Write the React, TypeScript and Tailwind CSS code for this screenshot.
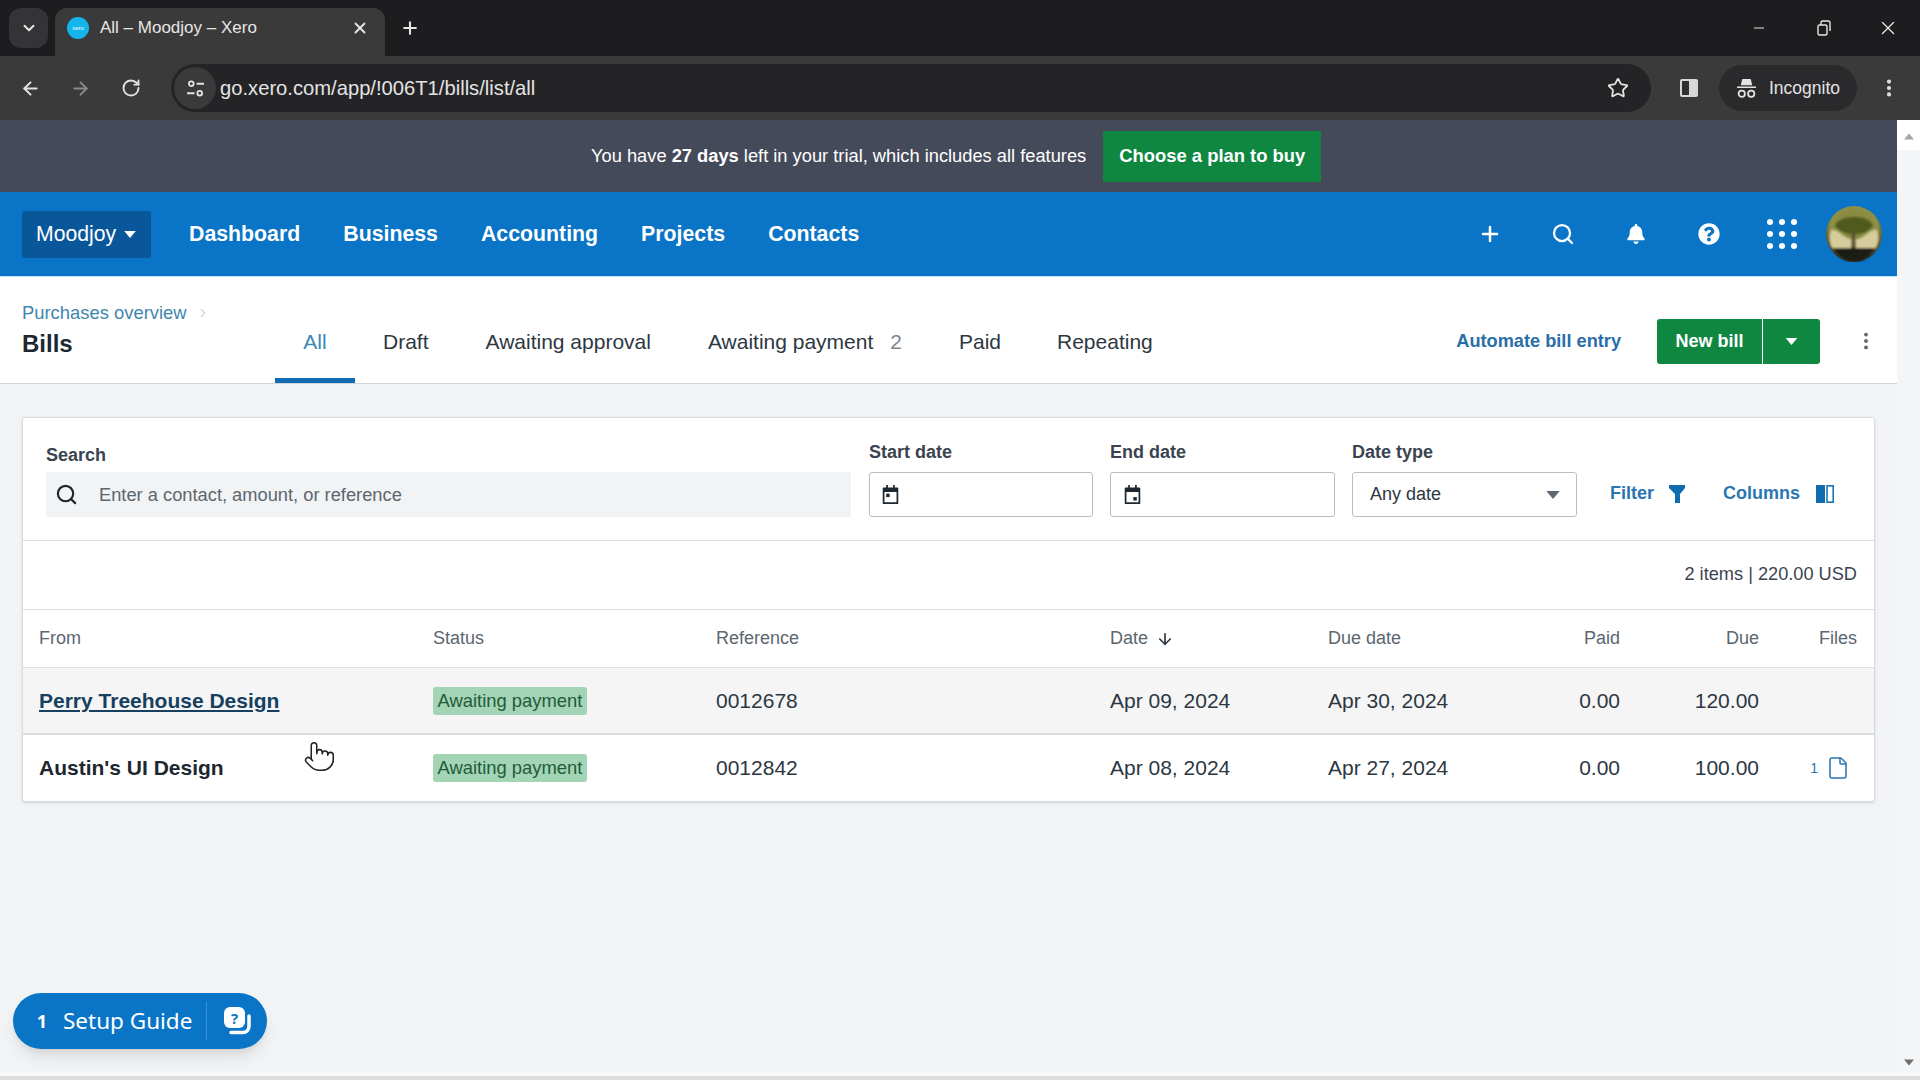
import { ArrowDown, ArrowLeft, ArrowRight, ChevronDown, ChevronRight, EllipsisVertical, File, Minus, Plus, Pointer, RotateCw, Search, Star, X } from "lucide-react";
import { FaBell, FaQuestionCircle } from "react-icons/fa";

const tableGrid = "grid grid-cols-[394px_283px_394px_218px_146px_146px_139px_98px] items-center pl-4";

const Caret = ({ className }: { className: string }) => (
  <svg viewBox="0 0 10 6" className={className} fill="currentColor">
    <path d="M0 0h10L5 6z" />
  </svg>
);

const CalendarIcon = ({ right }: { right?: boolean }) => (
  <svg viewBox="0 0 18 22" className="h-[19px] w-[17px] text-[#1d2730]" fill="currentColor">
    <path d="M4 0h2v3h6V0h2v3h3a1 1 0 0 1 1 1v17a1 1 0 0 1-1 1H1a1 1 0 0 1-1-1V4a1 1 0 0 1 1-1h3zM2 8v12h14V8z" />
    <rect x={right ? 10 : 4} y={right ? 14 : 10} width="4" height="4" />
  </svg>
);

const TabStrip = () => (
  <div className="flex h-[56px] shrink-0 items-end bg-[#1d1d1f] pl-[9px] text-[#e6e6e6]">
    <div className="mb-[8px] flex h-[40px] w-[39px] items-center justify-center rounded-[12px] bg-[#343436]">
      <ChevronDown className="h-[18px] w-[18px]" strokeWidth={2.5} />
    </div>
    <div className="ml-[7px] flex h-[48px] w-[330px] items-center rounded-t-[12px] bg-[#3a3a3a] pb-[8px] pl-[12px] pr-[16px]">
      <div className="flex h-[22px] w-[22px] items-center justify-center rounded-full bg-[#13b5ea] text-[6px] text-white">xero</div>
      <span className="ml-[11px] text-[17px]">All – Moodjoy – Xero</span>
      <X className="ml-auto h-[18px] w-[18px]" strokeWidth={2.5} />
    </div>
    <Plus className="mb-[18px] ml-[15px] h-[20px] w-[20px]" strokeWidth={2.5} />
    <div className="mb-[18px] ml-auto flex h-[20px] items-center">
      <Minus className="h-[16px] w-[16px]" strokeWidth={1.5} />
      <svg viewBox="0 0 16 16" className="ml-[49px] h-[16px] w-[16px]" fill="none" stroke="currentColor" strokeWidth="1.4">
        <rect x="2" y="5" width="9" height="10" rx="1.5" />
        <path d="M5 5V2.5A1.5 1.5 0 0 1 6.5 1h6A1.5 1.5 0 0 1 14 2.5V11" />
      </svg>
      <X className="ml-[45px] mr-[21px] h-[22px] w-[22px]" strokeWidth={1.5} />
    </div>
  </div>
);

const Toolbar = () => (
  <div className="flex h-[64px] shrink-0 items-center bg-[#3a3a3a] pl-[20px] text-[#e3e3e3]">
    <ArrowLeft className="h-[21px] w-[21px]" strokeWidth={2.25} />
    <ArrowRight className="ml-[29px] h-[21px] w-[21px] text-[#8a8a8a]" strokeWidth={2.25} />
    <RotateCw className="ml-[30px] h-[20px] w-[20px]" strokeWidth={2.25} />
    <div className="ml-[30px] flex h-[48px] w-[1480px] items-center rounded-full bg-[#242426]">
      <div className="ml-[3px] flex h-[42px] w-[42px] items-center justify-center rounded-full bg-[#3a3a3a]">
        <svg viewBox="0 0 18 18" className="h-[19px] w-[19px]" fill="none" stroke="currentColor" strokeWidth="1.7">
          <circle cx="5" cy="4.5" r="2.2" />
          <path d="M10 4.5h7M1 13.5h7" />
          <circle cx="13" cy="13.5" r="2.2" />
        </svg>
      </div>
      <span className="ml-[4px] text-[20.2px] text-[#e3e3e3]">go.xero.com/app/!006T1/bills/list/all</span>
      <Star className="ml-auto mr-[22px] h-[22px] w-[22px]" strokeWidth={2} />
    </div>
    <svg viewBox="0 0 20 20" className="ml-[28px] h-[20px] w-[20px]">
      <rect x="1" y="1" width="18" height="18" rx="2" fill="#d8d8d8" />
      <rect x="3" y="3" width="7" height="14" fill="#303032" />
    </svg>
    <div className="ml-[20px] flex h-[46px] w-[138px] items-center rounded-full bg-[#2a2a2c] pl-[17px]">
      <svg viewBox="0 0 20 20" className="h-[21px] w-[21px]" fill="currentColor">
        <path d="M6 1h8l1.5 6H4.500zM1 8h18v1.600H1z" />
        <circle cx="5.500" cy="15" r="3" fill="none" stroke="currentColor" strokeWidth="1.700" />
        <circle cx="14.500" cy="15" r="3" fill="none" stroke="currentColor" strokeWidth="1.700" />
      </svg>
      <span className="ml-[12px] text-[17.5px]">Incognito</span>
    </div>
    <EllipsisVertical className="ml-[21px] h-[22px] w-[22px]" strokeWidth={2.5} />
  </div>
);

const TrialBanner = () => (
  <div className="flex h-[72px] shrink-0 items-center bg-[#454a5a] pl-[591px] text-white">
    <span className="text-[18.3px]">
      You have <b>27 days</b> left in your trial, which includes all features
    </span>
    <button className="ml-[17px] h-[51px] w-[218px] bg-[#0f8741] text-[18.4px] font-bold text-white">Choose a plan to buy</button>
  </div>
);

const NavBar = () => (
  <div className="flex h-[85px] shrink-0 items-center border-b border-[#bfe6f5] bg-[#0a74c6] pl-[22px] text-white">
    <div className="flex h-[47px] w-[129px] items-center rounded-[3px] bg-[#09569b] pl-[14px] text-[21.2px]">
      Moodjoy
      <Caret className="ml-[8px] h-[7px] w-[12px]" />
    </div>
    <div className="ml-[38px] flex gap-[43px] pt-[2px] text-[21.3px] font-bold">
      <span>Dashboard</span>
      <span>Business</span>
      <span>Accounting</span>
      <span>Projects</span>
      <span>Contacts</span>
    </div>
    <div className="ml-auto flex items-center pr-[15px]">
      <Plus className="h-[24px] w-[24px]" strokeWidth={2.5} />
      <Search className="ml-[49px] h-[24px] w-[24px]" strokeWidth={2.25} />
      <FaBell className="ml-[51px] h-[20px] w-[20px]" />
      <FaQuestionCircle className="ml-[52px] h-[22px] w-[22px]" />
      <div className="ml-[47px] grid h-[30px] w-[30px] grid-cols-3 gap-[6px]">
        {Array.from({ length: 9 }).map((_, i) => (
          <div key={i} className="h-[6px] w-[6px] rounded-full bg-white" />
        ))}
      </div>
      <svg viewBox="0 0 56 56" className="ml-[29px] h-[56px] w-[56px]">
        <defs>
          <radialGradient id="sky" cx="50%" cy="40%" r="60%">
            <stop offset="0%" stopColor="#7c8438" />
            <stop offset="70%" stopColor="#8f8f48" />
            <stop offset="100%" stopColor="#33321f" />
          </radialGradient>
          <filter id="soft">
            <feGaussianBlur stdDeviation="1.2" />
          </filter>
        </defs>
        <circle cx="28" cy="28" r="28" fill="url(#sky)" />
        <g filter="url(#soft)">
          <path d="M5 24c6-2 12 8 23 10 11-2 17-12 23-10 2 6 2 12-1 18H6c-3-6-3-12-1-18z" fill="#d6cc9c" />
          <path d="M9 20C12 8 44 8 47 20c-5 6-12 8-19 8s-14-2-19-8z" fill="#4f5a1e" />
          <path d="M26 24h3l1 20h-5z" fill="#5a5433" />
          <path d="M7 42h42c-5 10-14 14-21 14S12 52 7 42z" fill="#1e1d18" />
        </g>
      </svg>
    </div>
  </div>
);

const PageHeader = () => (
  <div className="flex h-[107px] shrink-0 items-stretch border-b border-[#d3d6d9] bg-white pl-[22px] pr-[20px]">
    <div className="w-[253px] pt-[25px]">
      <div className="flex items-center text-[18.4px] leading-[22px] text-[#3f86ae]">
        Purchases overview
        <ChevronRight className="ml-[9px] h-[14px] w-[14px] text-[#9aa3aa]" strokeWidth={1.5} />
      </div>
      <div className="mt-[6px] text-[24px] font-bold leading-[28px] text-[#1d2730]">Bills</div>
    </div>
    <div className="flex text-[21px] text-[#2d3742]">
      <div className="flex w-[80px] items-center justify-center border-b-[5px] border-[#0f6cb0] pt-[28px] text-[#3d88b6]">All</div>
      <div className="ml-[28px] flex items-center pt-[23px]">Draft</div>
      <div className="ml-[57px] flex items-center pt-[23px]">Awaiting approval</div>
      <div className="ml-[57px] flex items-center pt-[23px]">
        Awaiting payment<span className="ml-[17px] text-[#7d868e]">2</span>
      </div>
      <div className="ml-[57px] flex items-center pt-[23px]">Paid</div>
      <div className="ml-[56px] flex items-center pt-[23px]">Repeating</div>
    </div>
    <div className="ml-auto flex items-center pt-[22px]">
      <span className="pt-[1px] text-[18.2px] font-bold text-[#2a6ea8]">Automate bill entry</span>
      <div className="ml-[36px] flex h-[45px] w-[163px] overflow-hidden rounded-[3px] bg-[#0f8741] text-white">
        <div className="flex w-[106px] items-center justify-center border-r border-white text-[18px] font-bold">New bill</div>
        <div className="flex flex-1 items-center justify-center">
          <Caret className="h-[7px] w-[13px]" />
        </div>
      </div>
      <EllipsisVertical className="ml-[35px] h-[22px] w-[22px] text-[#5f6870]" strokeWidth={2.25} />
    </div>
  </div>
);

const FilterBar = () => (
  <div className="flex h-[123px] items-end border-b border-[#dcdfe2] pb-[23px] pl-[23px] text-[#2d3742]">
    <div className="w-[805px]">
      <div className="mb-[6px] text-[18px] font-bold leading-[22px] text-[#3a4450]">Search</div>
      <div className="flex h-[45px] items-center bg-[#f2f3f4] pl-[9px] text-[18.3px] text-[#5b6670]">
        <Search className="h-[23px] w-[23px] text-[#1d2730]" strokeWidth={2.25} />
        <span className="ml-[21px]">Enter a contact, amount, or reference</span>
      </div>
    </div>
    <div className="ml-[18px] w-[224px]">
      <div className="mb-[9px] text-[18px] font-bold leading-[22px] text-[#3a4450]">Start date</div>
      <div className="flex h-[45px] items-center rounded-[3px] border border-[#b9bec3] pl-[12px]">
        <CalendarIcon />
      </div>
    </div>
    <div className="ml-[17px] w-[225px]">
      <div className="mb-[9px] text-[18px] font-bold leading-[22px] text-[#3a4450]">End date</div>
      <div className="flex h-[45px] items-center rounded-[3px] border border-[#b9bec3] pl-[13px]">
        <CalendarIcon right />
      </div>
    </div>
    <div className="ml-[17px] w-[225px]">
      <div className="mb-[9px] text-[18px] font-bold leading-[22px] text-[#3a4450]">Date type</div>
      <div className="flex h-[45px] items-center justify-between rounded-[3px] border border-[#b9bec3] pl-[17px] pr-[16px] text-[18px]">
        Any date
        <Caret className="h-[8px] w-[14px] text-[#5f6870]" />
      </div>
    </div>
    <div className="ml-[33px] flex h-[45px] items-center pb-[2px] text-[18px] font-bold text-[#2a76b0]">
      Filter
      <svg viewBox="0 0 16 18" className="ml-[15px] h-[18px] w-[16px]" fill="#0f6cb0">
        <path d="M0 0h16v3l-5 6v9H6V9L0 3z" />
      </svg>
      <span className="ml-[38px]">Columns</span>
      <svg viewBox="0 0 18 18" className="ml-[16px] h-[18px] w-[18px]">
        <rect x="0" y="0" width="9" height="18" fill="#0f6cb0" />
        <rect x="11" y="0.800" width="6.200" height="16.400" fill="none" stroke="#0f6cb0" strokeWidth="1.500" />
      </svg>
    </div>
  </div>
);

const BillRow = ({ from, link, reference, date, due, amount, files, shaded }: { from: string; link?: boolean; reference: string; date: string; due: string; amount: string; files?: boolean; shaded?: boolean }) => (
  <div className={`${tableGrid} text-[21px] text-[#2d3742] ${shaded ? "h-[67px] bg-[#f5f5f6] border-b-[2px] border-[#dcdfe2]" : "h-[66px]"}`}>
    <span className={link ? "font-bold text-[#16405f] underline" : "font-bold text-[#1d2730]"}>{from}</span>
    <span className="flex h-[28px] w-[154px] items-center justify-center rounded-[3px] bg-[#a3d4b5] text-[18.4px] text-[#1f5c39]">Awaiting payment</span>
    <span>{reference}</span>
    <span>{date}</span>
    <span>{due}</span>
    <span className="text-right">0.00</span>
    <span className="text-right">{amount}</span>
    <span className="flex items-center justify-end pr-[7px]">
      {files && (
        <>
          <span className="text-[14px] text-[#2a76b0]">1</span>
          <File className="ml-[8px] h-[24px] w-[24px] text-[#2a76b0]" strokeWidth={1.5} />
        </>
      )}
    </span>
  </div>
);

const BillsCard = () => (
  <div className="mx-[22px] mt-[33px] rounded-[3px] border border-[#d9dcdf] bg-white shadow-sm">
    <FilterBar />
    <div className="flex h-[69px] items-center justify-end border-b border-[#dcdfe2] pr-[17px] text-[18.2px] text-[#3a4450]">2 items | 220.00 USD</div>
    <div className={`${tableGrid} h-[58px] border-b border-[#dcdfe2] text-[18px] text-[#5b6670]`}>
      <span>From</span>
      <span>Status</span>
      <span>Reference</span>
      <span className="flex items-center">
        Date
        <ArrowDown className="ml-[8px] h-[18px] w-[18px] text-[#2d3742]" strokeWidth={2.25} />
      </span>
      <span>Due date</span>
      <span className="text-right">Paid</span>
      <span className="text-right">Due</span>
      <span className="text-right">Files</span>
    </div>
    <BillRow from="Perry Treehouse Design" link reference="0012678" date="Apr 09, 2024" due="Apr 30, 2024" amount="120.00" shaded />
    <BillRow from="Austin's UI Design" reference="0012842" date="Apr 08, 2024" due="Apr 27, 2024" amount="100.00" files />
  </div>
);

const SetupGuide = () => (
  <div className="absolute bottom-[23px] left-[13px] flex h-[56px] w-[254px] items-center rounded-full bg-[#0a74c6] pl-[17px] font-['Noto_Sans',sans-serif] text-white shadow-lg">
    <span className="flex h-[24px] w-[24px] items-center justify-center text-[18px] font-bold">1</span>
    <span className="ml-[9px] text-[22.5px]">Setup Guide</span>
    <div className="ml-[14px] h-[38px] w-px bg-[#3b92d4]" />
    <svg viewBox="0 0 30 30" className="ml-[16px] h-[30px] w-[30px]">
      <path d="M8 26.500h12a6 6 0 0 0 6-6V10" fill="none" stroke="#fff" strokeWidth="3.500" strokeLinecap="round" />
      <rect x="1" y="1" width="21" height="21" rx="6" fill="#fff" />
      <text x="11.500" y="17.500" textAnchor="middle" fontSize="15" fontWeight="700" fill="#0a74c6" fontFamily="Noto Sans, sans-serif">?</text>
    </svg>
  </div>
);

export default function App() {
  return (
    <div className="flex h-screen w-screen flex-col overflow-hidden bg-[#f2f3f4] font-['Liberation_Sans',Arial,sans-serif]">
      <TabStrip />
      <Toolbar />
      <div className="flex min-h-0 flex-1">
        <div className="relative min-w-0 flex-1">
          <TrialBanner />
          <NavBar />
          <PageHeader />
          <BillsCard />
          <Pointer className="absolute left-[303px] top-[620px] h-[33px] w-[33px] fill-white text-[#222]" strokeWidth={1.1} />
          <SetupGuide />
        </div>
        <div className="flex w-[23px] shrink-0 flex-col items-center justify-between bg-[#f4f5f6]">
          <div className="flex h-[30px] w-full items-center justify-center bg-white pt-[2px]">
            <Caret className="h-[7px] w-[10px] rotate-180 text-[#a5a5a5]" />
          </div>
          <Caret className="mb-[6px] h-[7px] w-[10px] text-[#6f6f6f]" />
        </div>
      </div>
      <div className="h-[4px] shrink-0 bg-[#f8f8f8]" />
      <div className="h-[4px] shrink-0 bg-[#dcdcdc]" />
    </div>
  );
}
